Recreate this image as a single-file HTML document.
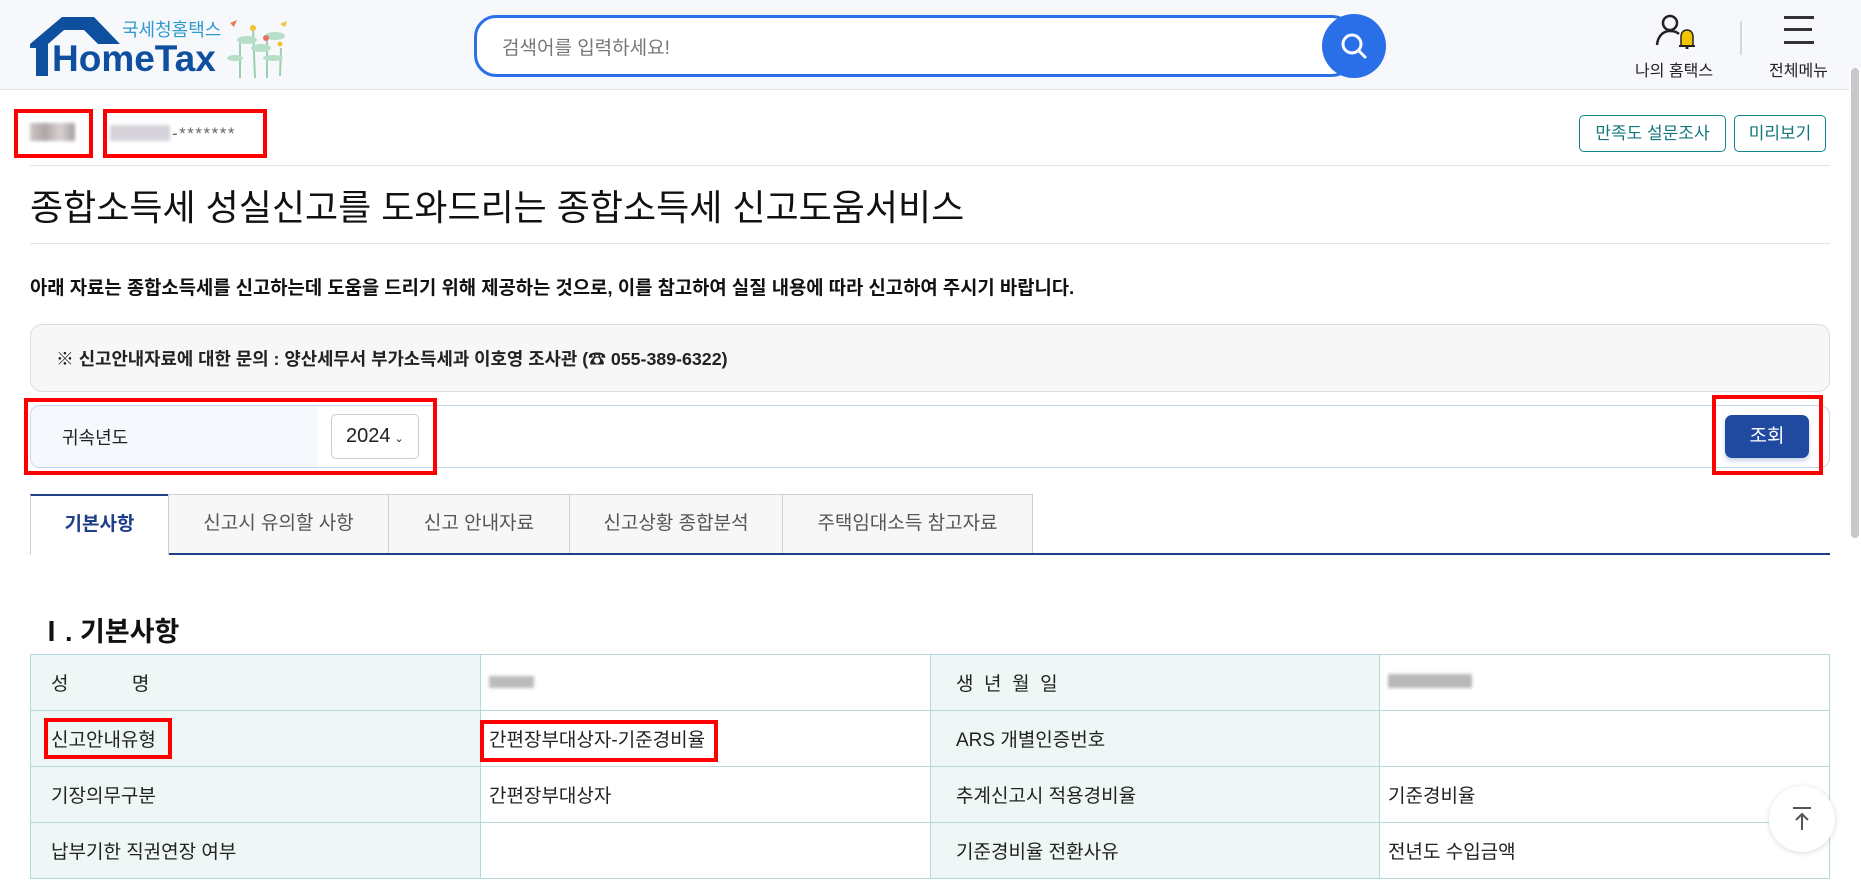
<!DOCTYPE html>
<html><head><meta charset="utf-8"><style>
*{margin:0;padding:0;box-sizing:border-box}
body{width:1861px;height:884px;overflow:hidden;background:#fff;font-family:"Liberation Sans","Noto Sans CJK KR",sans-serif;color:#222;position:relative}
.a{position:absolute}
.red{position:absolute;border:4px solid #f00}
.hdr{left:0;top:0;width:1861px;height:90px;background:#f7f8fc;border-bottom:1px solid #e2e4ea}
.sb{left:1849px;top:68px;width:12px;height:816px;background:#fff}
.sb div{position:absolute;left:2px;top:0;width:8px;height:470px;background:#c8c8c8;border-radius:4px}
table{border-collapse:collapse;position:absolute;left:30px;top:654px;width:1800px}
td{border:1px solid #b5d8da;height:56px;font-size:19px;padding-left:20px}
td.l{background:#eef7f6;padding-left:20px}
.tab{position:absolute;top:494px;height:60px;background:#f7f7f7;border:1px solid #cfcfcf;border-bottom:none;font-size:19px;color:#555;text-align:center;line-height:58px}
</style></head><body>
<div class="a hdr"></div>
<!-- logo -->
<svg class="a" style="left:28px;top:14px" width="100" height="70" viewBox="0 0 100 70"><path d="M2 30 L34 3 L66 3 L92 30 L70 30 L56 16 L36 16 L20 30 L20 62 L8 62 L8 34 L2 34 Z" fill="#0f4fa0"/></svg>
<div class="a" style="left:52px;top:38px;font-size:37px;font-weight:bold;color:#0f4fa0;letter-spacing:0px">HomeTax</div>
<div class="a" style="left:122px;top:16px;font-size:18px;color:#2d9ad0">국세청홈택스</div>
<svg class="a" style="left:225px;top:18px" width="70" height="62" viewBox="0 0 70 62"><g stroke="#9ccfb0" stroke-width="2" fill="none"><path d="M15 60 L15 25"/><path d="M30 60 L28 10"/><path d="M42 60 L42 20"/><path d="M55 58 L56 30"/></g><g fill="#b7dfc8"><ellipse cx="22" cy="22" rx="10" ry="4"/><ellipse cx="36" cy="30" rx="10" ry="4"/><ellipse cx="50" cy="18" rx="10" ry="4"/><ellipse cx="10" cy="40" rx="8" ry="3"/><ellipse cx="48" cy="40" rx="10" ry="3"/></g><circle cx="28" cy="10" r="3" fill="#f1c232"/><circle cx="41" cy="20" r="3" fill="#e87060"/><circle cx="55" cy="26" r="2.5" fill="#f1c232"/><path d="M5 5 L12 2 L9 9Z" fill="#e08050"/><path d="M55 6 L62 3 L60 9Z" fill="#f1c232"/></svg>
<!-- search -->
<div class="a" style="left:474px;top:15px;width:880px;height:62px;border:3px solid #2b6fe8;border-radius:22px;background:#fff"></div>
<div class="a" style="left:502px;top:33px;font-size:19px;color:#777">검색어를 입력하세요!</div>
<div class="a" style="left:1322px;top:14px;width:64px;height:64px;border-radius:50%;background:#2b6fe8"></div>
<svg class="a" style="left:1337px;top:29px" width="34" height="34" viewBox="0 0 34 34"><circle cx="15" cy="15" r="9" stroke="#fff" stroke-width="3" fill="none"/><path d="M22 22 L28 28" stroke="#fff" stroke-width="3" stroke-linecap="round"/></svg>
<!-- right header -->
<svg class="a" style="left:1654px;top:13px" width="46" height="36" viewBox="0 0 46 36"><circle cx="16" cy="10" r="7" stroke="#222" stroke-width="2.5" fill="none"/><path d="M3 32 C4 22 10 18 16 18 C20 18 23 19 25 21" stroke="#222" stroke-width="2.5" fill="none"/><path d="M27 33 L27 24 C27 19 30 17 33 17 C36 17 39 19 39 24 L39 33 Z" fill="#f5c400" stroke="#222" stroke-width="1.5"/><path d="M25 33 L41 33" stroke="#222" stroke-width="2"/><circle cx="33" cy="35" r="1.5" fill="#222"/></svg>
<div class="a" style="left:1635px;top:57px;font-size:16px;color:#222">나의 홈택스</div>
<div class="a" style="left:1740px;top:21px;width:2px;height:34px;background:#d6d8de"></div>
<div class="a" style="left:1784px;top:16px;width:30px;height:3px;background:#333"></div>
<div class="a" style="left:1784px;top:28px;width:28px;height:3px;background:#333"></div>
<div class="a" style="left:1784px;top:41px;width:30px;height:3px;background:#333"></div>
<div class="a" style="left:1769px;top:57px;font-size:16px;color:#222">전체메뉴</div>
<div class="a sb"><div></div></div>
<!-- user -->
<div class="a" style="left:30px;top:123px;width:45px;height:18px;background:linear-gradient(90deg,#b8b0b0,#8a8080,#c8c0c0,#807878);opacity:.7;filter:blur(1.5px)"></div>
<div class="red" style="left:14px;top:109px;width:79px;height:49px"></div>
<div class="a" style="left:110px;top:125px;width:60px;height:16px;background:#d6d4da;filter:blur(1.5px)"></div>
<div class="a" style="left:172px;top:124px;font-size:17px;color:#666;letter-spacing:1.5px">-*******</div>
<div class="red" style="left:103px;top:109px;width:164px;height:49px"></div>
<div class="a" style="left:1579px;top:115px;width:147px;height:37px;border:1px solid #12868c;border-radius:5px;font-size:17px;color:#12767c;text-align:center;line-height:35px">만족도 설문조사</div>
<div class="a" style="left:1734px;top:115px;width:92px;height:37px;border:1px solid #12868c;border-radius:5px;font-size:17px;color:#12767c;text-align:center;line-height:35px">미리보기</div>
<div class="a" style="left:30px;top:165px;width:1800px;height:1px;background:#e3e3e3"></div>
<div class="a" style="left:30px;top:179px;font-size:36px;color:#111">종합소득세 성실신고를 도와드리는 종합소득세 신고도움서비스</div>
<div class="a" style="left:30px;top:243px;width:1800px;height:1px;background:#e3e3e3"></div>
<div class="a" style="left:30px;top:273px;font-size:18.8px;font-weight:bold;color:#111">아래 자료는 종합소득세를 신고하는데 도움을 드리기 위해 제공하는 것으로, 이를 참고하여 실질 내용에 따라 신고하여 주시기 바랍니다.</div>
<div class="a" style="left:30px;top:324px;width:1800px;height:68px;background:#f7f7f7;border:1px solid #ddd;border-radius:12px"></div>
<div class="a" style="left:56px;top:345px;font-size:17.8px;font-weight:bold;color:#222">※ 신고안내자료에 대한 문의 : 양산세무서 부가소득세과 이호영 조사관 (☎ 055-389-6322)</div>
<!-- search row -->
<div class="a" style="left:30px;top:405px;width:1800px;height:63px;border:1px solid #c4d6ee;border-radius:10px;background:#fff;overflow:hidden"><div style="width:287px;height:100%;background:#f5f8fd"></div></div>
<div class="a" style="left:62px;top:424px;font-size:18px;color:#222">귀속년도</div>
<div class="a" style="left:331px;top:414px;width:88px;height:45px;border:1px solid #ccc;border-radius:5px;background:#fff;font-size:20px;line-height:43px;padding-left:14px">2024<span style="font-size:11px;margin-left:4px">⌄</span></div>
<div class="red" style="left:24px;top:398px;width:413px;height:77px"></div>
<div class="a" style="left:1725px;top:415px;width:84px;height:43px;background:#1f4aa0;border-radius:7px;color:#fff;font-size:19px;text-align:center;line-height:43px;box-shadow:0 3px 5px rgba(30,70,160,.25)">조회</div>
<div class="red" style="left:1712px;top:395px;width:111px;height:80px"></div>
<!-- tabs -->
<div class="tab" style="left:30px;width:139px;background:#fff;border-top:2px solid #1f3f8a;color:#1f3f8a;font-weight:bold;height:61px">기본사항</div>
<div class="tab" style="left:168px;width:221px">신고시 유의할 사항</div>
<div class="tab" style="left:388px;width:182px">신고 안내자료</div>
<div class="tab" style="left:569px;width:214px">신고상황 종합분석</div>
<div class="tab" style="left:782px;width:251px">주택임대소득 참고자료</div>
<div class="a" style="left:169px;top:553px;width:1661px;height:2px;background:#1f3f8a"></div>
<div class="a" style="left:38px;top:610px;font-size:27px;font-weight:bold;color:#111">Ⅰ. 기본사항</div>
<table>
<tr><td class="l" style="width:450px">성&nbsp;&nbsp;&nbsp;&nbsp;&nbsp;&nbsp;&nbsp;&nbsp;&nbsp;&nbsp;&nbsp;&nbsp;명</td><td style="width:450px;padding-left:8px"><span style="display:inline-block;width:45px;height:12px;background:#bbb;filter:blur(1.5px)"></span></td><td class="l" style="width:449px;padding-left:25px">생&nbsp;&nbsp;년&nbsp;&nbsp;월&nbsp;&nbsp;일</td><td style="padding-left:8px"><span style="display:inline-block;width:84px;height:14px;background:#b8b8b8;filter:blur(1.5px)"></span></td></tr>
<tr><td class="l">신고안내유형</td><td style="padding-left:8px">간편장부대상자-기준경비율</td><td class="l" style="padding-left:25px">ARS 개별인증번호</td><td></td></tr>
<tr><td class="l">기장의무구분</td><td style="padding-left:8px">간편장부대상자</td><td class="l" style="padding-left:25px">추계신고시 적용경비율</td><td style="padding-left:8px">기준경비율</td></tr>
<tr><td class="l">납부기한 직권연장 여부</td><td></td><td class="l" style="padding-left:25px">기준경비율 전환사유</td><td style="padding-left:8px">전년도 수입금액</td></tr>
</table>
<div class="red" style="left:44px;top:718px;width:128px;height:41px"></div>
<div class="red" style="left:480px;top:720px;width:238px;height:42px"></div>
<div class="a" style="left:1769px;top:786px;width:66px;height:66px;border-radius:50%;background:#fff;box-shadow:0 1px 6px rgba(0,0,0,.15)"></div>
<svg class="a" style="left:1791px;top:806px" width="22" height="26" viewBox="0 0 22 26"><path d="M2 2 L20 2" stroke="#555" stroke-width="2"/><path d="M11 24 L11 9 M5 14 L11 8 L17 14" stroke="#555" stroke-width="2" fill="none"/></svg>
</body></html>
